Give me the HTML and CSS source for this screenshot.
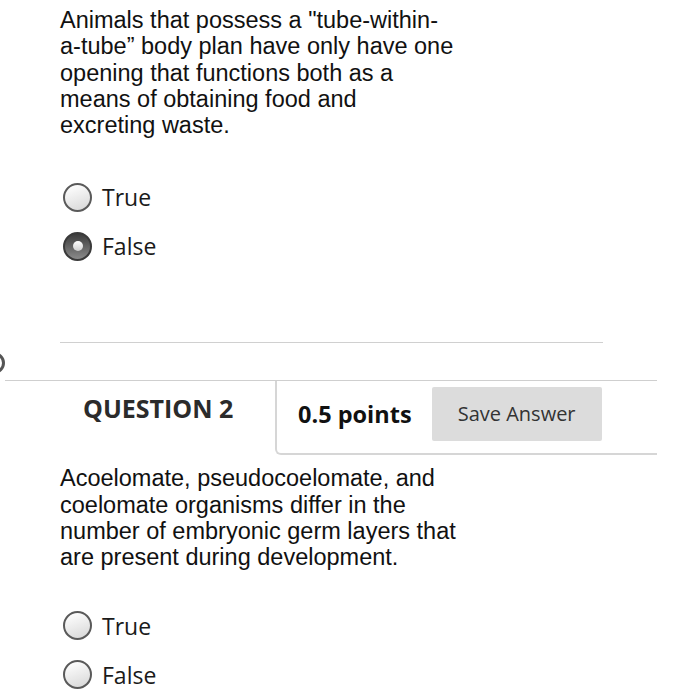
FILE: index.html
```html
<!DOCTYPE html>
<html lang="en">
<head>
  <meta charset="UTF-8" />
  <title>Quiz</title>
  <link rel="stylesheet" href="styles.css">
</head>
<body>
  <div class="question">
    <p class="q-text">Animals that possess a "tube-within-<br>a-tube” body plan have only have one<br>opening that functions both as a<br>means of obtaining food and<br>excreting waste.</p>

    <div class="answers">
      <label class="answer"><span class="radio"></span>True</label>
      <label class="answer"><span class="radio checked"></span>False</label>
    </div>

    <div class="divider"></div>
  </div>

  <div class="edge-dot"></div>

  <div class="q-header">
    <div class="q-title">QUESTION 2</div>
    <div class="q-meta">
      <span class="points">0.5 points</span>
      <button class="save-btn">Save Answer</button>
    </div>
  </div>

  <div class="question second">
    <p class="q-text">Acoelomate, pseudocoelomate, and<br>coelomate organisms differ in the<br>number of embryonic germ layers that<br>are present during development.</p>

    <div class="answers">
      <label class="answer"><span class="radio"></span>True</label>
      <label class="answer"><span class="radio"></span>False</label>
    </div>
  </div>
</body>
</html>
```

FILE: styles.css
```css
body {
  margin: 0;
  background-color: #fff;
  color: #111;
  font-family: "Liberation Sans", Arial, sans-serif;
  overflow: hidden;
}

.question {
  padding-left: 60px;
}

.q-text {
  margin: 0;
  padding-top: 7px;
  font-size: 23.5px;
  line-height: 26.3px;
  white-space: nowrap;
}

.answers {
  margin-top: 45px;
  display: flex;
  flex-direction: column;
  gap: 21px;
}

.answer {
  display: flex;
  align-items: center;
  gap: 10px;
  height: 28px;
  font-family: "Open Sans", sans-serif;
  font-size: 23px;
  color: #1a1a1a;
}

.radio {
  width: 25px;
  height: 25px;
  margin-left: 3px;
  border: 2px solid #5a5a5a;
  border-radius: 50%;
  background: linear-gradient(160deg, #fdfdfd 10%, #d6d6d6 100%);
  display: flex;
  align-items: center;
  justify-content: center;
}

.radio.checked {
  background: linear-gradient(180deg, #3c3c3c 0%, #8a8a8a 100%);
  border-color: #3a3a3a;
}

.radio.checked::after {
  content: "";
  width: 10px;
  height: 10px;
  border-radius: 50%;
  background: linear-gradient(180deg, #fff 0%, #cfcfcf 100%);
}

.divider {
  margin-top: 82px;
  width: 543px;
  border-top: 1px solid #d0d0d0;
}

.edge-dot {
  width: 22px;
  height: 22px;
  margin: 9px 0 0 -17px;
  border: 3px solid #555;
  border-radius: 50%;
  box-sizing: border-box;
}

.q-header {
  margin-top: 6px;
  margin-left: 5px;
  width: 652px;
  border-top: 1px solid #cfcfcf;
  display: flex;
}

.q-title {
  width: 270px;
  padding-top: 10px;
  padding-left: 78px;
  box-sizing: border-box;
  font-family: "Open Sans", sans-serif;
  font-weight: bold;
  font-size: 25px;
  color: #2b2b2b;
}

.q-meta {
  flex: 1;
  height: 74px;
  padding-bottom: 7px;
  box-sizing: border-box;
  border-left: 2px solid #d6d6d6;
  border-bottom: 2px solid #d6d6d6;
  border-bottom-left-radius: 6px;
  display: flex;
  align-items: center;
  padding-left: 21px;
  gap: 20px;
}

.points {
  font-family: "Open Sans", sans-serif;
  font-weight: bold;
  font-size: 23.5px;
  color: #111;
}

.save-btn {
  width: 170px;
  height: 54px;
  background-color: #dcdcdc;
  border: none;
  border-radius: 2px;
  font-family: "Open Sans", sans-serif;
  font-size: 20px;
  color: #333;
}

.second .q-text {
  padding-top: 10px;
}

.second .answers {
  margin-top: 41px;
}
```
